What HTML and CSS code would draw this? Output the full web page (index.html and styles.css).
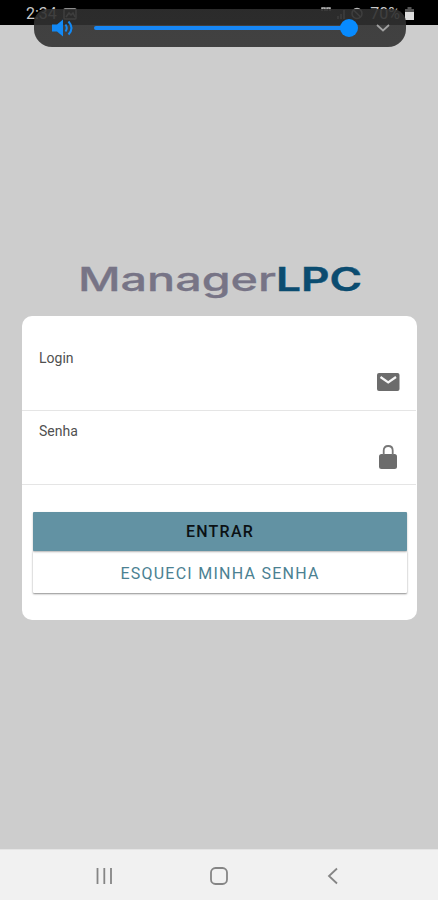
FILE: index.html
```html
<!DOCTYPE html>
<html lang="pt-BR">
<head>
<meta charset="utf-8">
<title>ManagerLPC</title>
<link rel="stylesheet" href="styles.css">
</head>
<body>
<div class="screen">
  <header class="status">
    <span class="time">2:34</span>
    <svg class="picture" width="14" height="12" viewBox="0 0 14 12"><rect x="1" y="1" width="12" height="10" rx="1"/><path d="M3 9l3-4 2 2 2-2 2 4"/></svg>
    <span class="spacer"></span>
    <svg class="signals" width="46" height="15" viewBox="0 0 46 15"><path d="M1 5V2h3v3M6 5V2h3v3M17 13v-3M20 13V8M23 13V4"/><circle cx="36" cy="7.500" r="5"/><path d="M32.500 4l7 7"/></svg>
    <span class="percent">70%</span>
    <svg class="battery" width="9" height="13" viewBox="0 0 9 13"><path d="M2.500 0h4v2H9v11H0V2h2.500z" fill="#555"/><path d="M0 5h9v8H0z" fill="#ddd"/></svg>
  </header>
  <div class="volume">
    <svg class="speaker" width="24" height="20" viewBox="0 0 24 20"><path d="M1 6.500h5l6-5v17l-6-5H1z" fill="#1289f5"/><path d="M14.500 6.500q2.500 3.500 0 7M17.500 3.500q6 6.500 0 13" fill="none" stroke="#1289f5" stroke-width="2"/></svg>
    <div class="track"><span class="knob"></span></div>
    <svg class="expand" width="14" height="8" viewBox="0 0 14 8"><path d="M1 1l6 5.500L13 1" fill="none" stroke="#a2a2a2" stroke-width="1.700"/></svg>
  </div>
  <main>
    <svg class="brand" width="300" height="54" viewBox="-8 -6 300 54" role="img" aria-label="ManagerLPC">
      <text class="name" x="-1" y="29" textLength="198" lengthAdjust="spacingAndGlyphs">Manager</text>
      <text class="suffix" x="197" y="29" textLength="86" lengthAdjust="spacingAndGlyphs">LPC</text>
    </svg>
    <section class="card">
      <div class="field login">
        <span class="label">Login</span>
        <svg class="icon" width="24" height="20" viewBox="0 0 24 20"><rect x="1" y="1" width="22.500" height="18" rx="2" fill="#6c6c6c"/><path d="M4.500 5l7.700 5.500L20 5" fill="none" stroke="#f7f7f7" stroke-width="2.200"/></svg>
      </div>
      <div class="field senha">
        <span class="label">Senha</span>
        <svg class="icon" width="24" height="26" viewBox="0 0 24 26"><rect x="3" y="10" width="18" height="15" rx="2.500" fill="#6c6c6c"/><path d="M7.700 11V6.500Q7.700 2 12.200 2T16.700 6.500V11" fill="none" stroke="#777" stroke-width="1.800"/></svg>
      </div>
      <div class="actions">
        <button class="enter">ENTRAR</button>
        <button class="forgot">ESQUECI MINHA SENHA</button>
      </div>
    </section>
  </main>
  <nav>
    <svg width="18" height="18" viewBox="0 0 18 18"><path d="M2.500 1v16M9.300 1v16M16 1v16"/></svg>
    <svg width="18" height="18" viewBox="0 0 18 18"><rect x="1" y="1" width="16" height="16" rx="4.500"/></svg>
    <svg width="18" height="18" viewBox="0 0 18 18"><path d="M13 1.500L5 9l8 7.500"/></svg>
  </nav>
</div>
</body>
</html>
```

FILE: styles.css
```css
* { box-sizing: border-box; }
body { margin: 0; font-family: Roboto, sans-serif; }
.screen {
  position: relative;
  display: flex;
  flex-direction: column;
  width: 438px;
  height: 900px;
  overflow: hidden;
  background: #cdcdcd;
}
.status {
  display: flex;
  align-items: center;
  height: 25px;
  padding: 2px 24px 0 26px;
  background: #000;
  color: #c8c8c8;
  font-size: 16px;
}
.picture { margin-left: 6px; fill: none; stroke: #bbb; stroke-width: 1.5; }
.spacer { flex: 1; }
.signals { margin-right: 3px; fill: none; stroke: #bbb; stroke-width: 1.5; }
.percent { margin-right: 5px; }
.volume {
  position: absolute;
  top: 9px;
  left: 34px;
  display: flex;
  align-items: center;
  width: 372px;
  height: 38px;
  padding: 0 16px 0 17px;
  border-radius: 14px 14px 18px 18px;
  background: linear-gradient(rgba(48, 48, 48, .9), rgba(50, 50, 50, .9));
}
.track {
  position: relative;
  width: 256px;
  height: 4px;
  margin-left: 19px;
  border-radius: 2px;
  background: #1787f5;
}
.knob {
  position: absolute;
  top: -7px;
  right: -8px;
  width: 18px;
  height: 18px;
  border-radius: 50%;
  background: #078bff;
}
.expand { margin-left: auto; }
main { flex: 1; padding: 231px 21px 0 22px; }
.brand { display: block; margin: 0 0 6px 49px; overflow: visible; }
.brand text { font-family: Inter, sans-serif; font-size: 32px; }
.name { fill: #777486; font-weight: 500; stroke: #777486; stroke-width: .3; }
.suffix { fill: #0b4c70; font-weight: 600; stroke: #0b4c70; stroke-width: .4; }
.card {
  height: 304px;
  border-radius: 10px;
  background: #fff;
}
.field {
  display: flex;
  justify-content: space-between;
  margin-right: 1px;
  border-bottom: 1px solid #e5e5e5;
}
.login { height: 95px; padding: 34px 16px 0 17px; }
.senha { height: 74px; padding: 12px 16px 0 17px; }
.label { color: #505050; font-size: 14px; line-height: 17px; }
.login .icon { margin-top: 22px; }
.senha .icon { margin-top: 21px; }
.actions { display: flex; flex-direction: column; padding: 27px 10px 0 11px; }
button {
  width: 100%;
  height: 39px;
  padding: 0;
  border: 0;
  border-radius: 1px;
  font: 500 16px Roboto, sans-serif;
  letter-spacing: 1.25px;
}
.enter { z-index: 1; background: #6292a3; color: #0b1114; box-shadow: 0 1px 2px rgba(0, 0, 0, .3); }
.forgot { height: 42px; padding-top: 3px; background: #fff; color: #4b8192; font-weight: 400; box-shadow: 0 1px 2px rgba(0, 0, 0, .45); }
nav {
  display: flex;
  justify-content: space-between;
  height: 51px;
  padding: 17px 96px 0 95px;
  border-top: 1px solid #e5e5e5;
  background: #f1f1f1;
}
nav svg { fill: none; stroke: #858585; stroke-width: 1.8; }
```
